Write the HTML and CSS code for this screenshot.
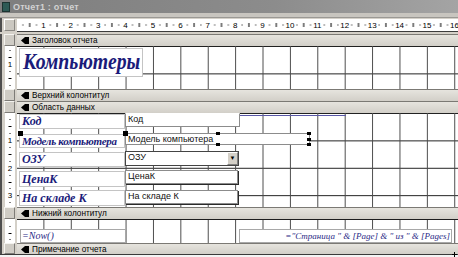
FILE: index.html
```html
<!DOCTYPE html>
<html lang="ru">
<head>
    <meta charset="UTF-8">
    <title>Отчет1 : отчет</title>
    <link rel="stylesheet" href="styles.css">
</head>
<body>

<div class="window">
    <div class="titlebar">
        <span class="win-icon"></span>
        <span class="title">Отчет1 : отчет</span>
    </div>
    <div class="frame-gap"></div>

    <!-- horizontal ruler -->
    <div class="row ruler-row">
        <div class="side"><div class="corner"></div></div>
        <div class="main">
            <svg class="hruler" width="441" height="12" viewBox="0 0 441 12">
                <defs>
                    <pattern id="hticks" x="-1" y="0" width="27.4" height="12" patternUnits="userSpaceOnUse">
                        <rect x="6.4" y="5.5" width="1" height="1" fill="#000"/>
                        <rect x="13.2" y="4" width="1" height="4" fill="#000"/>
                        <rect x="20" y="5.5" width="1" height="1" fill="#000"/>
                    </pattern>
                </defs>
                <rect width="441" height="12" fill="url(#hticks)"/>
                <g class="rnum" text-anchor="middle">
                    <text x="26.4" y="9">1</text>
                    <text x="53.8" y="9">2</text>
                    <text x="81.2" y="9">3</text>
                    <text x="108.6" y="9">4</text>
                    <text x="136" y="9">5</text>
                    <text x="163.4" y="9">6</text>
                    <text x="190.8" y="9">7</text>
                    <text x="218.2" y="9">8</text>
                    <text x="245.6" y="9">9</text>
                    <text x="273" y="9">10</text>
                    <text x="300.4" y="9">11</text>
                    <text x="327.8" y="9">12</text>
                    <text x="355.2" y="9">13</text>
                    <text x="382.6" y="9">14</text>
                    <text x="410" y="9">15</text>
                    <text x="437.4" y="9">16</text>
                </g>
            </svg>
        </div>
    </div>
    <div class="ruler-gap"></div>

    <!-- report header -->
    <div class="row bar-row">
        <div class="side"><div class="selector"></div></div>
        <div class="main section-bar">
            <svg class="bar-icon" width="8" height="7" viewBox="0 0 8 7"><polygon points="0,3.5 4,0 8,0 8,7 4,7" fill="#000"/></svg>
            Заголовок отчета
        </div>
    </div>
    <div class="row body-row report-header">
        <div class="side">
            <svg class="vruler" width="10" height="43">
                <rect x="4.5" y="4" width="1" height="1"/>
                <rect x="3.5" y="11" width="3" height="1"/>
                <text x="5" y="21" text-anchor="middle">1</text>
                <rect x="4.5" y="25" width="1" height="1"/>
                <rect x="3.5" y="32" width="3" height="1"/>
                <rect x="4.5" y="39" width="1" height="1"/>
            </svg>
        </div>
        <div class="main canvas">
            <div class="ctl label big-label"><span class="squeeze">Компьютеры</span></div>
        </div>
    </div>

    <!-- page header -->
    <div class="row bar-row">
        <div class="side"><div class="selector"></div></div>
        <div class="main section-bar">
            <svg class="bar-icon" width="8" height="7" viewBox="0 0 8 7"><polygon points="0,3.5 4,0 8,0 8,7 4,7" fill="#000"/></svg>
            Верхний колонтитул
        </div>
    </div>

    <!-- detail -->
    <div class="row bar-row">
        <div class="side"><div class="selector"></div></div>
        <div class="main section-bar">
            <svg class="bar-icon" width="8" height="7" viewBox="0 0 8 7"><polygon points="0,3.5 4,0 8,0 8,7 4,7" fill="#000"/></svg>
            Область данных
        </div>
    </div>
    <div class="row body-row detail">
        <div class="side">
            <svg class="vruler" width="10" height="94">
                <rect x="4.5" y="6" width="1" height="1"/>
                <rect x="3.5" y="13" width="3" height="1"/>
                <rect x="4.5" y="20" width="1" height="1"/>
                <text x="5" y="30" text-anchor="middle">1</text>
                <rect x="4.5" y="34" width="1" height="1"/>
                <rect x="3.5" y="41" width="3" height="1"/>
                <rect x="4.5" y="48" width="1" height="1"/>
                <text x="5" y="58" text-anchor="middle">2</text>
                <rect x="4.5" y="62" width="1" height="1"/>
                <rect x="3.5" y="69" width="3" height="1"/>
                <rect x="4.5" y="75" width="1" height="1"/>
                <text x="5" y="85" text-anchor="middle">3</text>
                <rect x="4.5" y="89" width="1" height="1"/>
            </svg>
        </div>
        <div class="main canvas">
            <div class="line-ctl"></div>

            <div class="ctl label row-label lbl-kod">Код</div>
            <div class="ctl field fld-kod">Код</div>

            <div class="ctl label row-label lbl-model">Модель компьютера</div>
            <div class="ctl field fld-model">Модель компьютера</div>
            <span class="handle move h-lbl"></span>
            <span class="handle move h-fld"></span>
            <span class="handle h-tm"></span>
            <span class="handle h-tr"></span>
            <span class="handle h-mr"></span>
            <span class="handle h-bm"></span>
            <span class="handle h-br"></span>

            <div class="ctl label row-label lbl-ram">ОЗУ</div>
            <div class="ctl field fld-ram">ОЗУ<span class="drop">&#9660;</span></div>

            <div class="ctl label row-label lbl-price">ЦенаК</div>
            <div class="ctl field boxed fld-price">ЦенаК</div>

            <div class="ctl label row-label lbl-stock">На складе К</div>
            <div class="ctl field boxed fld-stock">На складе К</div>
        </div>
    </div>

    <!-- page footer -->
    <div class="row bar-row">
        <div class="side"><div class="selector"></div></div>
        <div class="main section-bar">
            <svg class="bar-icon" width="8" height="7" viewBox="0 0 8 7"><polygon points="0,3.5 4,0 8,0 8,7 4,7" fill="#000"/></svg>
            Нижний колонтитул
        </div>
    </div>
    <div class="row body-row page-footer">
        <div class="side">
            <svg class="vruler" width="10" height="24">
                <rect x="4.5" y="7" width="1" height="1"/>
                <rect x="3.5" y="14" width="3" height="1"/>
                <rect x="4.5" y="20" width="1" height="1"/>
            </svg>
        </div>
        <div class="main canvas no-rows">
            <div class="ctl expr now">=Now()</div>
            <div class="ctl expr pages">="Страница " &amp; [Page] &amp; " из " &amp; [Pages]</div>
        </div>
    </div>

    <!-- report footer -->
    <div class="row bar-row last-bar">
        <div class="side"><div class="selector"></div></div>
        <div class="main section-bar">
            <svg class="bar-icon" width="8" height="7" viewBox="0 0 8 7"><polygon points="0,3.5 4,0 8,0 8,7 4,7" fill="#000"/></svg>
            Примечание отчета
        </div>
    </div>
    <div class="bottom-edge">
        <svg class="resize-mark" width="5" height="5" viewBox="0 0 5 5"><path d="M2 0h1v5H2zM0 2h5v1H0z" fill="#000"/></svg>
    </div>
</div>

</body>
</html>
```

FILE: styles.css
```css
body {
    margin: 0;
    padding: 0;
    background-color: #d4d0c8;
    font-family: "Liberation Sans", Arial, sans-serif;
}

.window {
    width: 458px;
    height: 257px;
    overflow: hidden;
    display: flex;
    flex-direction: column;
    background-color: #d4d0c8;
}

.titlebar {
    height: 13px;
    display: flex;
    align-items: center;
    background: linear-gradient(to right, #7e7e7e, #8c8c8c 60%, #a4a4a4);
    color: #d2d2d2;
    font-size: 9px;
    font-weight: bold;
    letter-spacing: 0.2px;
}

.win-icon {
    width: 6px;
    height: 8px;
    margin: 0 3px 0 2px;
    background-color: #2d5a55;
    border: 1px solid #1c3431;
}

.frame-gap {
    height: 5px;
    background-color: #c8c5bf;
    border-bottom: 1px solid #9a9894;
    box-sizing: border-box;
}

.row {
    display: flex;
    flex-shrink: 0;
}

.side {
    width: 17px;
    flex-shrink: 0;
    box-sizing: border-box;
    border-left: 2px solid #4e4e4e;
    padding-left: 2px;
    background-color: #d4d0c8;
}

.main {
    flex: 1;
    position: relative;
}

/* rulers */

.ruler-row {
    height: 14px;
}

.ruler-row .side {
    padding-top: 1px;
}

.corner {
    width: 11px;
    height: 12px;
    box-sizing: border-box;
    background-color: #cbc8c1;
    border: 1px solid #8a8883;
    border-top-color: #fff;
    border-left-color: #fff;
}

.ruler-row .main {
    padding-top: 1px;
    border-bottom: 1px solid #3c3c3c;
    box-sizing: border-box;
}

.hruler {
    display: block;
    background-color: #fff;
}

.rnum text,
.vruler text {
    font-family: "Liberation Sans", Arial, sans-serif;
    font-size: 8px;
    fill: #000;
}

.ruler-gap {
    height: 2px;
    flex-shrink: 0;
}

.body-row .side {
    padding-left: 3px;
    padding-right: 2px;
}

.vruler {
    display: block;
    background-color: #fff;
    height: 100%;
}

/* section bars */

.bar-row {
    height: 12px;
}

.last-bar {
    height: 11px;
}

.selector {
    width: 11px;
    height: 100%;
    box-sizing: border-box;
    background-color: #cfccc5;
    border: 1px solid #7d7b77;
    border-top-color: #f4f3ef;
    border-left-color: #f4f3ef;
}

.section-bar {
    display: flex;
    align-items: center;
    gap: 3px;
    padding-left: 4px;
    box-sizing: border-box;
    background: linear-gradient(to bottom, #e6e4de, #d2cfc8);
    border-top: 1px solid #7b7974;
    font-size: 8.2px;
    color: #000;
    white-space: nowrap;
}

.bar-icon {
    flex-shrink: 0;
}

/* design canvas with 1 cm grid */

.canvas {
    background-color: #fff;
    background-image:
        linear-gradient(to right, #4a4a4a 1px, transparent 1px),
        linear-gradient(to bottom, #1e1e1e 1px, transparent 1px);
    background-size: 27.4px 100%, 100% 27.4px;
    background-position: -1px 0, 0 0;
}

.canvas.no-rows {
    background-image: linear-gradient(to right, #4a4a4a 1px, transparent 1px);
    background-size: 27.4px 100%;
    background-position: -1px 0;
    border-top: 1px solid #1e1e1e;
    box-sizing: border-box;
}

.report-header { height: 43px; }
.detail { height: 94px; }
.page-footer { height: 24px; }

.ctl {
    position: absolute;
    box-sizing: border-box;
    background-color: #fff;
    white-space: nowrap;
    overflow: hidden;
}

.label {
    border: 1px solid #c4c4c4;
    color: #1b1b7a;
    font-family: "Liberation Serif", "Times New Roman", serif;
    font-style: italic;
    font-weight: bold;
}

.big-label {
    left: 2px;
    top: 2px;
    width: 124px;
    height: 29px;
    font-size: 23px;
    line-height: 26px;
    padding-left: 3px;
}

.squeeze {
    display: inline-block;
    transform: scaleX(0.86);
    transform-origin: left center;
}

.row-label {
    left: 2px;
    width: 106px;
    font-size: 12px;
    line-height: 13px;
    padding-left: 2px;
}

.lbl-kod { top: 1px; height: 15px; }
.lbl-model { top: 21px; height: 14px; font-size: 11px; letter-spacing: -0.3px; overflow: visible; }
.lbl-ram { top: 39px; height: 15px; }
.lbl-price { top: 58px; height: 16px; line-height: 15px; }
.lbl-stock { top: 77px; height: 16px; line-height: 15px; }

.field {
    left: 108px;
    width: 115px;
    height: 14px;
    border: 1px solid #8c8c8c;
    font-size: 9px;
    line-height: 11px;
    padding-left: 2px;
    color: #111;
}

.fld-kod { top: 0; border-top-color: #fff; }
.fld-model { top: 20px; width: 185px; height: 12px; line-height: 10px; }
.fld-ram { top: 38px; width: 114px; height: 15px; border-color: #444; }
.fld-price { top: 57px; }
.fld-stock { top: 77px; }

.boxed {
    width: 113px;
    box-shadow: 1px 1px 0 #2a2a2a;
}

.drop {
    position: absolute;
    right: 0;
    top: 0;
    width: 11px;
    height: 13px;
    box-sizing: border-box;
    background-color: #d4d0c8;
    border: 1px solid #808080;
    border-top-color: #fff;
    border-left-color: #fff;
    font-size: 6px;
    line-height: 11px;
    text-align: center;
    color: #000;
}

.line-ctl {
    position: absolute;
    left: 223px;
    top: 2px;
    width: 106px;
    height: 1px;
    background-color: #5a58a8;
}

/* selection handles of the active control */

.handle {
    position: absolute;
    width: 4px;
    height: 3px;
    background-color: #000;
}

.handle.move {
    width: 5px;
    height: 5px;
}

.h-lbl { left: 1px; top: 18px; }
.h-fld { left: 106px; top: 18px; }
.h-tm { left: 199px; top: 19px; }
.h-tr { left: 290px; top: 19px; }
.h-mr { left: 290px; top: 25px; }
.h-bm { left: 199px; top: 30px; }
.h-br { left: 290px; top: 30px; }

/* page footer expressions */

.expr {
    top: 9px;
    height: 14px;
    border: 1px solid #a8a8a8;
    color: #2a2a86;
    font-family: "Liberation Serif", "Times New Roman", serif;
    font-style: italic;
    font-size: 9px;
    line-height: 12px;
}

.now {
    left: 3px;
    width: 106px;
    padding-left: 1px;
    font-size: 10px;
}

.pages {
    left: 222px;
    width: 213px;
    text-align: right;
    padding-right: 1px;
}

.bottom-edge {
    flex: 1;
    border-top: 1px solid #3a3a3a;
    background-color: #f4f4f4;
    position: relative;
}

.resize-mark {
    position: absolute;
    right: 1px;
    top: -3px;
}
```
